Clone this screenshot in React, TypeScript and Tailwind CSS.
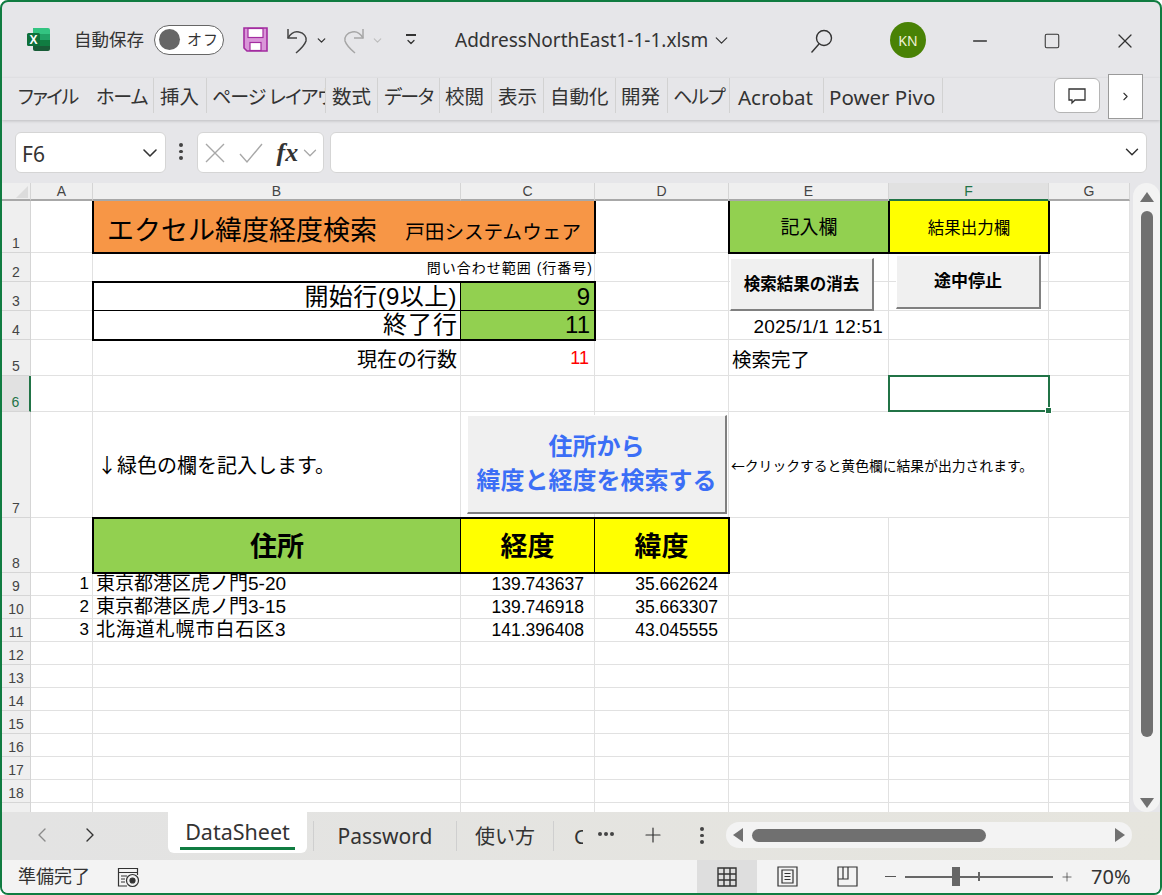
import type { ReactNode } from "react";
import { ChevronDown, ChevronLeft, ChevronRight, Minus, Plus, Square, X } from "lucide-react";

const uiFont = "font-['Noto_Sans','Noto_Sans_CJK_JP',sans-serif]";
const cellFont = "font-['Liberation_Sans','Noto_Sans_CJK_JP',sans-serif]";
const cjkFont = "font-['Noto_Sans_CJK_JP',sans-serif]";

const ribbonTabs = [
  { label: "ファイル", cls: "w-[78px] text-[19px] tracking-[-1.5px]" },
  { label: "ホーム", cls: "w-[58px] border-r text-[19px] tracking-[-1px]" },
  { label: "挿入", cls: "w-[53px] pl-[6px] border-r text-[19.5px]" },
  { label: "ページ レイアウ", cls: "w-[119px] pl-[5px] border-r text-[19px] tracking-[-1px]" },
  { label: "数式", cls: "w-[52px] pl-[6px] border-r text-[19.5px]" },
  { label: "データ", cls: "w-[62px] pl-[6px] border-r text-[19px] tracking-[-1.5px]" },
  { label: "校閲", cls: "w-[52px] pl-[5px] border-r text-[19.5px]" },
  { label: "表示", cls: "w-[52px] pl-[6px] border-r text-[19.5px]" },
  { label: "自動化", cls: "w-[72px] pl-[6px] border-r text-[19.5px]" },
  { label: "開発", cls: "w-[52px] pl-[5px] border-r text-[19.5px]" },
  { label: "ヘルプ", cls: "w-[62px] pl-[5px] border-r text-[19px] tracking-[-1px]" },
  { label: "Acrobat", cls: "w-[94px] pl-[8px] border-r text-[20.5px]" },
  { label: "Power Pivo", cls: "w-[119px] pl-[5px] border-r text-[20.5px]" },
];

const columns = ["A", "B", "C", "D", "E", "F", "G"];
const rowNumbers = Array.from({ length: 19 }, (_, i) => i + 1);

const box = "relative z-10 border-black items-center";
const green = "bg-[#92d050]";
const yellow = "bg-[#ffff00]";

type CellDef = { text?: ReactNode; cls?: string; boxed?: boolean };

// cells that carry something; merged neighbours are listed in skipped
const cells: Record<string, CellDef> = {
  B1: {
    boxed: true,
    cls: `col-span-2 ${box} -mt-[2px] -mx-px -mb-px border-2 bg-[#f79646] pl-[13px] pr-[13px] pt-[10px] justify-between`,
    text: (
      <>
        <span className="text-[27px] leading-none">エクセル緯度経度検索</span>
        <span className="text-[19.6px] leading-none pt-[2px]">戸田システムウェア</span>
      </>
    ),
  },
  E1: { boxed: true, cls: `${box} -mt-[2px] -ml-px -mb-px border-y-2 border-l-2 border-r pt-[3px] ${green} justify-center text-[19px]`, text: "記入欄" },
  F1: { boxed: true, cls: `${box} -mt-[2px] -mr-px -mb-px border-y-2 border-r-2 border-l pt-[3px] ${yellow} justify-center text-[16.5px]`, text: "結果出力欄" },
  B2: { cls: "col-span-2 items-end justify-end pr-[1px] pb-[2px] text-[14px] tracking-[1px]", text: "問い合わせ範囲 (行番号)" },
  B3: { boxed: true, cls: `${box} -mt-px -ml-px border-t-2 border-l-2 border-r border-b justify-end pr-[3px] text-[24px] tracking-[0.4px]`, text: "開始行(9以上)" },
  C3: { boxed: true, cls: `${box} -mt-px -mr-px border-t-2 border-r-2 border-b ${green} justify-end pr-[4px] text-[24px]`, text: "9" },
  B4: { boxed: true, cls: `${box} -ml-px -mb-px border-b-2 border-l-2 border-r justify-end pr-[2px] text-[24px] tracking-[1px]`, text: "終了行" },
  C4: { boxed: true, cls: `${box} -mr-px -mb-px border-b-2 border-r-2 ${green} justify-end pr-[4px] text-[24px]`, text: "11" },
  E4: { cls: "items-end justify-end pr-[5px] pb-[1px] text-[19px] tracking-[0.2px]", text: "2025/1/1 12:51" },
  B5: { cls: "items-end justify-end pr-[3px] pb-[4px] text-[20px]", text: "現在の行数" },
  C5: { cls: "items-end justify-end pr-[5px] pb-[6px] text-[18px] text-[#ff0000]", text: "11" },
  E5: { cls: "items-end pl-[3px] pb-[4px] text-[19.5px]", text: "検索完了" },
  B7: { cls: `${cjkFont} pl-[4px] items-center text-[20px]`, text: "↓緑色の欄を記入します。" },
  E7: { cls: `${cjkFont} col-span-2 pl-[2px] items-center text-[13.8px]`, text: "←クリックすると黄色欄に結果が出力されます。" },
  B8: { boxed: true, cls: `${box} -mt-px -ml-px -mb-px border-y-2 border-l-2 border-r pt-[3px] ${green} justify-center font-bold text-[27px]`, text: "住所" },
  C8: { boxed: true, cls: `${box} -mt-px -mb-px border-y-2 border-r pt-[3px] ${yellow} justify-center font-bold text-[27px]`, text: "経度" },
  D8: { boxed: true, cls: `${box} -mt-px -mr-px -mb-px border-y-2 border-r-2 pt-[3px] ${yellow} justify-center font-bold text-[27px]`, text: "緯度" },
  A9: { cls: "items-end justify-end pr-[3px] text-[17px]", text: "1" },
  B9: { cls: "items-end pl-[3px] text-[19px]", text: "東京都港区虎ノ門5-20" },
  C9: { cls: "items-end justify-end pr-[10px] text-[17.5px]", text: "139.743637" },
  D9: { cls: "items-end justify-end pr-[10px] text-[17.5px]", text: "35.662624" },
  A10: { cls: "items-end justify-end pr-[3px] text-[17px]", text: "2" },
  B10: { cls: "items-end pl-[3px] text-[19px]", text: "東京都港区虎ノ門3-15" },
  C10: { cls: "items-end justify-end pr-[10px] text-[17.5px]", text: "139.746918" },
  D10: { cls: "items-end justify-end pr-[10px] text-[17.5px]", text: "35.663307" },
  A11: { cls: "items-end justify-end pr-[3px] text-[17px]", text: "3" },
  B11: { cls: "items-end pl-[3px] text-[19px] tracking-[0.9px]", text: "北海道札幌市白石区3" },
  C11: { cls: "items-end justify-end pr-[10px] text-[17.5px]", text: "141.396408" },
  D11: { cls: "items-end justify-end pr-[10px] text-[17.5px]", text: "43.045555" },
};

const skipped = new Set(["C1", "C2", "F7"]);

function ExcelLogo() {
  return (
    <svg width="25" height="25" viewBox="0 0 25 25">
      <path d="M7 1h15a2 2 0 0 1 2 2v4H7z" fill="#33c481" />
      <path d="M7 7h17v6H7z" fill="#21a366" />
      <path d="M7 13h17v6H7z" fill="#107c41" />
      <path d="M7 19h17v3a2 2 0 0 1-2 2H9a2 2 0 0 1-2-2z" fill="#185c37" />
      <rect x="1" y="6" width="13" height="13" rx="1.5" fill="#0f703b" />
      <text x="7.5" y="16.5" fontSize="12" fontWeight="700" fill="#fff" textAnchor="middle" fontFamily="Liberation Sans">
        X
      </text>
    </svg>
  );
}

function SaveIcon() {
  return (
    <svg width="25" height="25" viewBox="0 0 25 25">
      <path d="M1 1h23v23H4l-3-3z" fill="#d996d8" stroke="#a32ca0" strokeWidth="1.6" />
      <rect x="5" y="1.5" width="15" height="9" fill="#fff" stroke="#a32ca0" strokeWidth="1.2" />
      <rect x="7" y="15.5" width="11" height="8" fill="#fff" stroke="#a32ca0" strokeWidth="1.2" />
    </svg>
  );
}

function UndoIcon({ color, flip }: { color: string; flip?: boolean }) {
  return (
    <svg width="24" height="27" viewBox="0 0 24 27" fill="none" stroke={color} strokeWidth="1.5" className={flip ? "-scale-x-100" : ""}>
      <path d="M2 2v9h9" />
      <path d="M2 11c3-5 7-7 11-6 5 1 8 5 7 9-1 3-4 7-10 12" />
    </svg>
  );
}

function Dots({ className }: { className?: string }) {
  return (
    <span className={`flex flex-col gap-[3px] ${className ?? ""}`}>
      <span className="h-[3.5px] w-[3.5px] rounded-full bg-[#444]" />
      <span className="h-[3.5px] w-[3.5px] rounded-full bg-[#444]" />
      <span className="h-[3.5px] w-[3.5px] rounded-full bg-[#444]" />
    </span>
  );
}

function TitleBar() {
  return (
    <div className={`flex h-[76px] items-center pt-[1px] text-[#333] ${uiFont}`}>
      <div className="ml-[24px] mb-[2px]">
        <ExcelLogo />
      </div>
      <span className="ml-[23px] text-[17.5px] mb-[2px] whitespace-nowrap">自動保存</span>
      <div className="ml-[10px] mb-[2px] flex h-[30px] w-[70px] items-center rounded-full border border-[#666] bg-white pl-[4px]">
        <span className="h-[21px] w-[21px] rounded-full bg-[#666]" />
        <span className="ml-[7px] text-[15px] tracking-[1px]">オフ</span>
      </div>
      <div className="ml-[19px] mb-[2px]">
        <SaveIcon />
      </div>
      <div className="ml-[18px] mb-[1px]">
        <UndoIcon color="#444" />
      </div>
      <ChevronDown size={13} strokeWidth={2.4} className="ml-[5px]" />
      <div className="ml-[13px] mb-[1px]">
        <UndoIcon color="#a6a6a6" flip />
      </div>
      <ChevronDown size={13} strokeWidth={2} className="ml-[6px] text-[#bdbdbd]" />
      <div className="ml-[21px] flex flex-col items-center gap-[2px] mb-[1px]">
        <span className="h-[2px] w-[10px] bg-[#333]" />
        <ChevronDown size={12} strokeWidth={2.6} className="-my-[2px]" />
      </div>
      <span className="ml-[38px] text-[19px] w-[252px] whitespace-nowrap">AddressNorthEast1-1-1.xlsm</span>
      <ChevronDown size={21} strokeWidth={1.4} className="ml-[4px]" />
      <svg width="26" height="26" viewBox="0 0 26 26" fill="none" stroke="#333" strokeWidth="1.4" className="ml-[77px]">
        <circle cx="15" cy="10" r="7.5" />
        <path d="M10 16L2.5 24.5" />
      </svg>
      <div className="ml-[55px] flex h-[36px] w-[36px] items-center justify-center rounded-full bg-[#498205] text-[14px] text-[#f2f2d8] mb-[1px]">
        KN
      </div>
      <Minus size={22} strokeWidth={1.4} className="ml-[43px]" />
      <Square size={18} strokeWidth={1.4} className="ml-[52px]" />
      <X size={24} strokeWidth={1.3} className="ml-[52px]" />
    </div>
  );
}

function Ribbon() {
  return (
    <div className={`relative z-20 flex h-[42px] items-start bg-[#e6e6e9] pl-[16px] text-[#333] shadow-[0_1px_3px_rgba(0,0,0,0.18)] ${uiFont}`}>
      {ribbonTabs.map((tab) => (
        <div
          key={tab.label}
          className={`flex h-[35px] items-center overflow-hidden whitespace-nowrap border-[#d2d2d2] pt-[3px] [font-feature-settings:'palt'] ${tab.cls}`}
        >
          {tab.label}
        </div>
      ))}
      <div className="ml-[111px] flex h-[35px] w-[46px] items-center justify-center rounded-[6px] border border-[#b5b5b5] bg-white">
        <svg width="20" height="20" viewBox="0 0 20 20" fill="none" stroke="#333" strokeWidth="1.3">
          <path d="M2 3h16v11H8l-3 3v-3H2z" />
        </svg>
      </div>
      <div className="-mt-[4px] ml-[8px] flex h-[45px] w-[35px] items-center justify-center border border-[#9a9a9a] bg-white">
        <ChevronRight size={13} strokeWidth={2} />
      </div>
    </div>
  );
}

function FormulaBar() {
  return (
    <div className={`flex h-[63px] bg-[#e6e6e9] pl-[13px] pt-[12px] ${uiFont}`}>
      <div className="flex h-[41px] w-[151px] items-center justify-between rounded-[6px] border border-[#d5d5d5] bg-white pl-[6px] pr-[3px] pt-[5px] text-[21px] text-[#333]">
        F6
        <ChevronDown size={24} strokeWidth={1.6} className="-mt-[5px]" />
      </div>
      <Dots className="ml-[13px] mt-[11px]" />
      <div className="ml-[14px] flex h-[41px] w-[127px] items-center rounded-[6px] border border-[#d5d5d5] bg-white pl-[7px] text-[#a8a8a8]">
        <svg width="20" height="20" viewBox="0 0 20 20" fill="none" stroke="currentColor" strokeWidth="1.4">
          <path d="M1 1l18 18M19 1L1 19" />
        </svg>
        <svg width="26" height="22" viewBox="0 0 26 22" fill="none" stroke="currentColor" strokeWidth="1.4" className="ml-[13px]">
          <path d="M2 12l7 8L24 2" />
        </svg>
        <span className="ml-[13px] font-['Liberation_Serif',serif] text-[26px] font-bold italic text-[#333]">fx</span>
        <ChevronDown size={22} strokeWidth={1.4} className="ml-[1px]" />
      </div>
      <div className="ml-[6px] flex h-[41px] w-[817px] items-center justify-end rounded-[6px] border border-[#d5d5d5] bg-white pr-[3px] text-[#333]">
        <ChevronDown size={22} strokeWidth={1.6} className="mb-[2px]" />
      </div>
    </div>
  );
}

function SheetButton({ className, children }: { className: string; children: ReactNode }) {
  return (
    <div
      className={`absolute z-20 flex flex-col items-center justify-center border-b-2 border-r-2 border-t border-l border-b-[#808080] border-r-[#808080] border-t-white border-l-white bg-[#f0f0f0] ${className}`}
    >
      {children}
    </div>
  );
}

function Sheet() {
  return (
    <div className={`relative grid h-[629px] w-[1128px] shrink-0 grid-cols-[29px_62px_368px_134px_134px_160px_160px_81px] grid-rows-[18px_52px_29px_29px_29px_36px_36px_106px_55px_repeat(11,23px)] overflow-hidden bg-white text-black ${cellFont}`}>
      <div className="relative z-20 border-b-2 border-r border-[#a8a8a8] border-r-[#d5d5d5] bg-[#efefef]">
        <span className="absolute bottom-[1px] right-[2px] h-0 w-0 border-b-[12px] border-l-[12px] border-b-[#dcdcdc] border-l-transparent" />
      </div>
      {columns.map((c) => (
        <div
          key={c}
          className={`relative z-20 flex items-center justify-center border-b-2 border-r text-[14px] ${
            c === "F"
              ? "border-b-[#217346] border-r-[#d5d5d5] bg-[#e1e1e1] text-[#217346]"
              : "border-b-[#a8a8a8] border-r-[#d5d5d5] bg-[#efefef] text-[#444]"
          }`}
        >
          {c}
        </div>
      ))}
      {rowNumbers.map((r) => (
        <Row key={r} r={r} />
      ))}
      <SheetButton className="left-[728px] top-[75px] h-[53px] w-[144px] text-[16.5px] font-bold">検索結果の消去</SheetButton>
      <SheetButton className="left-[894px] top-[72px] h-[54px] w-[145px] text-[17px] font-bold">途中停止</SheetButton>
      <SheetButton className="left-[465px] top-[232px] h-[99px] w-[260px] text-[24px] font-bold leading-[34px] text-[#3b6ef6]">
        <span>住所から</span>
        <span>緯度と経度を検索する</span>
      </SheetButton>
      <div className="absolute left-[886px] top-[192px] z-20 h-[37px] w-[162px] border-2 border-[#217346]">
        <span className="absolute -bottom-[4px] -right-[4px] h-[7px] w-[7px] border border-white bg-[#217346]" />
      </div>
    </div>
  );
}

function Row({ r }: { r: number }) {
  const selected = r === 6;
  return (
    <>
      <div
        className={`flex items-end justify-center border-b text-[14px] leading-[17px] ${
          selected
            ? "border-r-2 border-b-[#d5d5d5] border-r-[#217346] bg-[#e1e1e1] text-[#217346]"
            : "border-r border-[#d5d5d5] bg-[#efefef] text-[#444]"
        }`}
      >
        {r < 19 ? r : null}
      </div>
      {columns.map((c) => {
        const id = `${c}${r}`;
        if (skipped.has(id)) return null;
        const cell = cells[id];
        return (
          <div
            key={id}
            className={`flex whitespace-nowrap leading-[22px] ${cell?.boxed ? "" : "border-b border-r border-[#e1e1e1]"} ${cell?.cls ?? ""}`}
          >
            {cell?.text}
          </div>
        );
      })}
    </>
  );
}

function VerticalScrollbar() {
  return (
    <div className="ml-[3px] flex h-[629px] w-[27px] flex-col items-center rounded-full bg-[#f3f3f3] pt-[9px]">
      <span className="h-0 w-0 border-x-[7px] border-b-[10px] border-x-transparent border-b-[#707070]" />
      <span className="mt-[9px] h-[526px] w-[12px] rounded-full bg-[#707070]" />
      <span className="mt-[61px] h-0 w-0 border-x-[7px] border-t-[10px] border-x-transparent border-t-[#707070]" />
    </div>
  );
}

function SheetTabs() {
  return (
    <div className={`flex h-[48px] items-start bg-linear-to-r from-[#e3e3e3] to-[#e6e5de] text-[#333] ${uiFont}`}>
      <div className="flex h-[41px] w-[166px] items-center pt-[4px] pl-[28px]">
        <ChevronLeft size={24} strokeWidth={1.4} className="text-[#8a8a8a]" />
        <ChevronRight size={24} strokeWidth={1.4} className="ml-[24px]" />
      </div>
      <div className="flex h-[41px] w-[139px] flex-col items-center rounded-b-[6px] bg-white pt-[6px] text-[21.5px] leading-[28px]">
        DataSheet
        <span className="mt-[1px] h-[3px] w-[115px] bg-[#107c41]" />
      </div>
      <div className="ml-[6px] mt-[9px] flex h-[30px] w-[144px] items-center justify-center border-x border-[#cfcfcf] pt-[2px] text-[21px]">Password</div>
      <div className="flex mt-[9px] h-[30px] w-[97px] items-center justify-center border-r border-[#cfcfcf] pt-[2px] text-[20px]">使い方</div>
      <div className="mt-[9px] h-[30px] w-[9px] ml-[20px] overflow-hidden pt-[1px] text-[20px]">C</div>
      <div className="ml-[15px] mt-[20px] flex gap-[2px]">
        <span className="h-[4px] w-[4px] rounded-full bg-[#444]" />
        <span className="h-[4px] w-[4px] rounded-full bg-[#444]" />
        <span className="h-[4px] w-[4px] rounded-full bg-[#444]" />
      </div>
      <Plus size={24} strokeWidth={1.2} className="ml-[27px] mt-[11px]" />
      <Dots className="ml-[35px] mt-[15px]" />
      <div className="ml-[22px] mt-[10px] flex h-[26px] w-[406px] items-center rounded-full bg-[#f3f3f3] pl-[7px] pr-[7px]">
        <span className="h-0 w-0 border-y-[7px] border-r-[10px] border-y-transparent border-r-[#707070]" />
        <span className="ml-[9px] h-[13px] w-[234px] rounded-full bg-[#707070]" />
        <span className="ml-auto h-0 w-0 border-y-[7px] border-l-[10px] border-y-transparent border-l-[#707070]" />
      </div>
    </div>
  );
}

function StatusBar() {
  return (
    <div className={`flex h-[33px] items-center bg-[#f3f3f3] text-[#333] ${uiFont}`}>
      <span className="ml-[16px] text-[18px] whitespace-nowrap">準備完了</span>
      <svg width="23" height="22" viewBox="0 0 23 22" fill="none" stroke="#333" strokeWidth="1.2" className="ml-[27px]">
        <path d="M10 20H1.5V2.5h19V9" />
        <path d="M1.5 6.5h19M4 10h6M4 13h4M4 16h4" />
        <circle cx="15.5" cy="14.5" r="6" fill="#f3f3f3" />
        <circle cx="15.5" cy="14.5" r="2.5" fill="#333" />
      </svg>
      <div className="ml-[557px] flex h-[33px] w-[60px] items-center justify-center bg-[#dedede]">
        <svg width="20" height="20" viewBox="0 0 20 20" fill="none" stroke="#333" strokeWidth="1.4">
          <path d="M1 1h18v18H1zM7 1v18M13 1v18M1 7h18M1 13h18" />
        </svg>
      </div>
      <svg width="21" height="21" viewBox="0 0 21 21" fill="none" stroke="#333" strokeWidth="1.2" className="ml-[20px]">
        <path d="M1 1h19v19H1zM5 4h11v13H5zM7.5 7.5h6M7.5 10.5h6M7.5 13.5h6" />
      </svg>
      <svg width="21" height="21" viewBox="0 0 21 21" fill="none" stroke="#333" strokeWidth="1.2" className="ml-[39px]">
        <path d="M1 1h19v19H1zM1 13h10V1M6 1v12" />
      </svg>
      <span className="ml-[27px] h-[1.5px] w-[11px] bg-[#555]" />
      <div className="relative ml-[9px] h-[2px] w-[148px] bg-[#666]">
        <span className="absolute -top-[9px] left-[47px] h-[19px] w-[8px] bg-[#666]" />
        <span className="absolute -top-[4px] left-[73px] h-[9px] w-[2px] bg-[#666]" />
      </div>
      <Plus size={14} strokeWidth={1.3} className="ml-[7px] text-[#444]" />
      <span className="ml-[17px] text-[20px]">70%</span>
    </div>
  );
}

export default function App() {
  return (
    <div className="h-[895px] w-[1162px] overflow-hidden rounded-[8px] border-2 border-[#107c41] bg-[#e6e6e9]">
      <TitleBar />
      <Ribbon />
      <FormulaBar />
      <div className="flex bg-[#e6e6e9]">
        <Sheet />
        <VerticalScrollbar />
      </div>
      <SheetTabs />
      <StatusBar />
    </div>
  );
}
